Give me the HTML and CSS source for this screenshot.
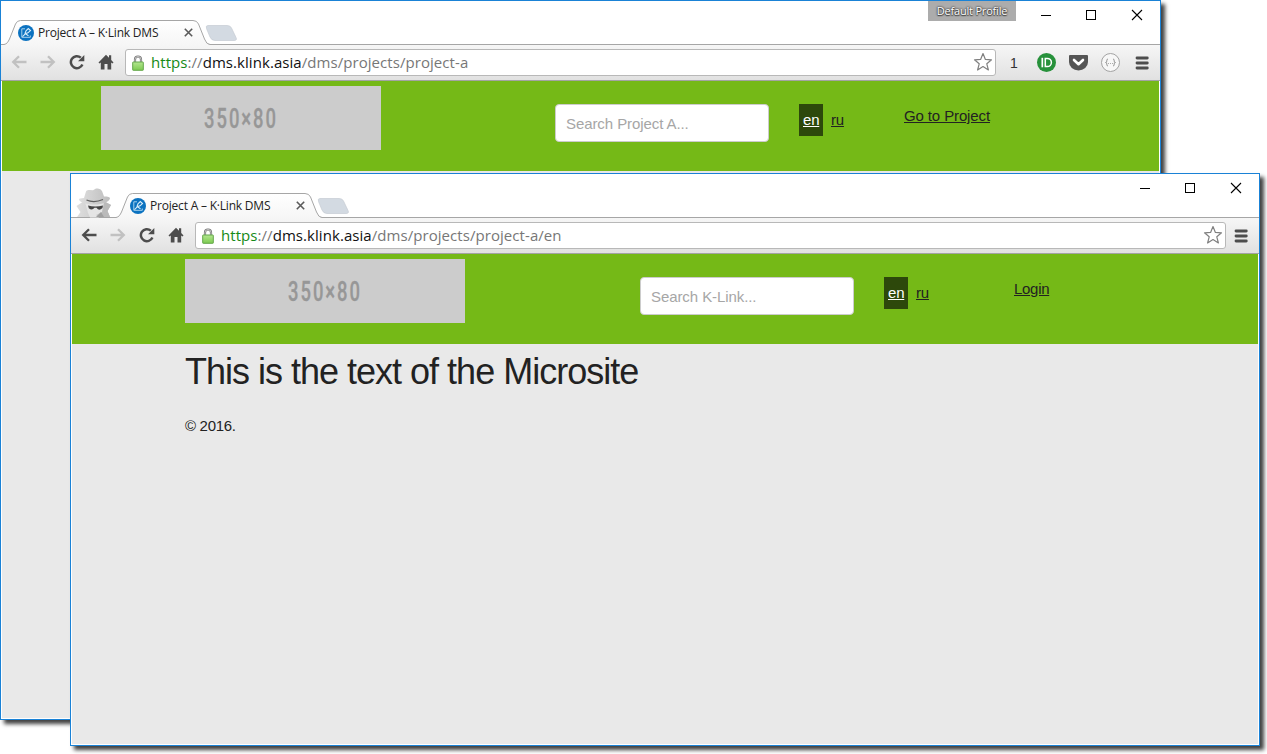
FILE: index.html
```
<!DOCTYPE html>
<html lang="en">
<head>
<meta charset="utf-8">
<title>Project A – K-Link DMS</title>
<link rel="stylesheet" href="styles.css">
</head>
<body>
<svg class="defs" width="0" height="0">
  <defs>
    <linearGradient id="tabfill" x1="0" y1="0" x2="0" y2="1"><stop offset="0" stop-color="#fff"/><stop offset="1" stop-color="#f6f6f6"/></linearGradient>
    <linearGradient id="lockfill" x1="0" y1="0" x2="0" y2="1"><stop offset="0" stop-color="#b4e690"/><stop offset="1" stop-color="#7ccb50"/></linearGradient>
    <linearGradient id="hat" x1="0" y1="0" x2="1" y2="0"><stop offset="0" stop-color="#dedede"/><stop offset="1" stop-color="#bdbdbd"/></linearGradient>
  </defs>
  <symbol id="tabshape" viewBox="0 0 240 25">
    <path d="M0 24.500C3 24 4 22 5.500 19L11.500 4Q13 .5 16.500 .5H189Q193 .5 194.500 4L200.500 19Q202 24.500 206 24.500V25H0Z" fill="url(#tabfill)"/>
    <path d="M0 24.500C3 24 4 22 5.500 19L11.500 4Q13 .5 16.500 .5H189Q193 .5 194.500 4L200.500 19Q202.500 24.500 206 24.500" fill="none" stroke="#a6a6a6"/>
    <path d="M204 5.500H223Q226.500 5.500 227.500 8L232 17.500Q233.500 20.500 230 20.500H211Q207.500 20.500 206 17L202.500 8.500Q201.500 5.500 204 5.500Z" fill="#d3dae2" stroke="#c6ccd3" stroke-width=".7"/>
  </symbol>
  <symbol id="favicon" viewBox="0 0 16 16">
    <circle cx="8" cy="8" r="8" fill="#0b72c0"/>
    <path d="M7 3.800H3.800V12.300H12.300V10.500" fill="none" stroke="#a5d0ec" stroke-width="1"/>
    <path d="M4.500 11.600L7.500 8.600M7 8.500L8 5.800 10.300 3.500 12.500 5.500 10 7.800 7.300 8.700 10.500 10.800" fill="none" stroke="#d8edfa" stroke-width="1.100"/>
  </symbol>
  <symbol id="closetab" viewBox="0 0 9 9"><path d="M.8 .8L8.200 8.200M8.200 .8L.8 8.200" stroke="#5a5a5a" stroke-width="1.600"/></symbol>
  <symbol id="arrow" viewBox="0 0 16 14"><path d="M15.500 7H2.500M8 1.200L2.200 7 8 12.800" fill="none" stroke="currentColor" stroke-width="2.300"/></symbol>
  <symbol id="reload" viewBox="0 0 16 16"><path d="M13.400 10.500A6 6 0 1 1 11.800 3.600" fill="none" stroke="#4d4d4d" stroke-width="2.500"/><path d="M15.300 1V7.300H9Z" fill="#4d4d4d"/></symbol>
  <symbol id="home" viewBox="0 0 16 16"><path d="M8 .8L11 3.800V1.300H13.200V6L15.500 8.500 14.500 9.500 13.200 8.500V15.500H9.500V10H6.500V15.500H2.800V8.500L1.500 9.500 .5 8.500Z" fill="#4d4d4d"/></symbol>
  <symbol id="lock" viewBox="0 0 12 16"><path d="M3 8V4.500A3 3 0 0 1 9 4.500V8" fill="none" stroke="#757575" stroke-width="2.200"/><path d="M3 8V4.500A3 3 0 0 1 9 4.500V8" fill="none" stroke="#d8d8d8" stroke-width=".8"/><rect x=".7" y="7" width="10.600" height="8.300" rx=".5" fill="url(#lockfill)" stroke="#63a74a"/></symbol>
  <symbol id="star" viewBox="0 0 20 20"><path d="M10 1.500L12.400 7.400 18.500 7.800 13.800 11.800 15.400 18 10 14.600 4.600 18 6.200 11.800 1.500 7.800 7.600 7.400Z" fill="#fff" stroke="#808080" stroke-width="1.200" stroke-linejoin="round"/></symbol>
  <symbol id="menu" viewBox="0 0 14 14"><path d="M2 2H12.300M2 7H12.300M2 12H12.300" stroke="#4d4d4d" stroke-width="2.800" stroke-linecap="round"/></symbol>
  <symbol id="controls" viewBox="0 0 102 13"><path d="M0 7.500H10" stroke="#000"/><rect x="45.500" y="2.500" width="9" height="9" fill="none" stroke="#000"/><path d="M91 2L101 12M101 2L91 12" stroke="#000" stroke-width="1.100"/></symbol>
  <symbol id="incognito" viewBox="0 0 36 30">
    <path d="M1 29L4.500 24 .5 18 8 13H28L35 17 31.500 23 34 29Z" fill="url(#hat)"/>
    <path d="M27 13L35 17 31.500 23 34 29H22L26 22Z" fill="#bababa"/>
    <path d="M9 14H28L26 24 20 27 23 29.500H14L12 25Z" fill="#e5e5e5"/>
    <path d="M8 10L10 3.500Q10.500 1.500 13.500 2L17 2.300 20 .6Q24.500 -.3 26 3L28 8.500C32 8.500 34 9 34 10.500 33 14 26 16.500 19 16.500S3 14.500 3 11.500Q3 10 8 10Z" fill="url(#hat)"/>
    <path d="M10.500 12Q18 15.300 27 11.500" fill="none" stroke="#606060" stroke-width="1.300"/>
    <path d="M12 17.500Q19 19.500 27 17.500L26.500 20Q23 23.500 20.500 19.800H18.500Q16 23 12.800 20.200Z" fill="#454545"/>
    <path d="M20 29L25 24 28 29Z" fill="#a0a0a0"/>
  </symbol>
</svg>

<section class="window window-back">
  <header class="strip">
    <div class="tab">
      <svg class="tab-shape" width="240" height="25"><use href="#tabshape"/></svg>
      <svg width="16" height="16"><use href="#favicon"/></svg>
      <span class="tab-title">Project A – K·Link DMS</span>
      <svg class="tab-close" width="9" height="9"><use href="#closetab"/></svg>
    </div>
    <span class="profile">Default Profile</span>
    <svg class="controls" width="102" height="13"><use href="#controls"/></svg>
  </header>
  <nav class="toolbar">
    <svg class="nav-icon off" width="16" height="14"><use href="#arrow"/></svg>
    <svg class="nav-icon off flip" width="16" height="14"><use href="#arrow"/></svg>
    <svg class="nav-icon" width="16" height="16"><use href="#reload"/></svg>
    <svg class="nav-icon" width="16" height="16"><use href="#home"/></svg>
    <div class="omnibox">
      <svg width="12" height="16"><use href="#lock"/></svg>
      <span class="url"><span class="scheme">https</span>://<span class="host">dms.klink.asia</span>/dms/projects/project-a</span>
      <svg class="star" width="20" height="20"><use href="#star"/></svg>
    </div>
    <div class="extensions">
      <span class="count">1</span>
      <svg width="20" height="20" viewBox="0 0 20 20"><circle cx="10.500" cy="10.500" r="9.500" fill="#27913b"/><path d="M6.300 5.800V15.300" stroke="#fff" stroke-width="1.700"/><path d="M9.300 6.400H11.300A4.100 4.100 0 0 1 11.300 14.600H9.300Z" fill="none" stroke="#fff" stroke-width="1.500"/></svg>
      <svg width="20" height="20" viewBox="0 0 20 20"><path d="M1 4Q1 3 2 3H19Q20 3 20 4V10A9.500 8.500 0 0 1 1 10Z" fill="#555"/><path d="M6 8L10.500 12.200 15 8" fill="none" stroke="#fff" stroke-width="2.600" stroke-linecap="round" stroke-linejoin="round"/></svg>
      <svg width="20" height="20" viewBox="0 0 20 20"><circle cx="10.500" cy="10.500" r="9" fill="#f7f7f7" stroke="#a3a3a3"/><path d="M8 7Q6.500 7 6.800 9 7 10.500 5.500 10.500 7 10.500 6.800 12 6.500 14 8 14M13 7Q14.500 7 14.200 9 14 10.500 15.500 10.500 14 10.500 14.200 12 14.500 14 13 14" fill="none" stroke="#999" stroke-width="1"/><path d="M8 11.500H13" stroke="#aaa" stroke-dasharray="1 1"/></svg>
    </div>
    <svg class="menu" width="14" height="14"><use href="#menu"/></svg>
  </nav>
  <main class="page">
    <div class="banner">
      <svg class="logo" width="280" height="64"><text class="logo-text" x="103" y="41.500" textLength="74" lengthAdjust="spacingAndGlyphs">350×80</text></svg>
      <div class="search">Search Project A...</div>
      <div class="langs"><a class="lang current">en</a><a class="lang">ru</a></div>
      <a class="action">Go to Project</a>
    </div>
  </main>
</section>

<section class="window window-front">
  <header class="strip">
    <svg class="spy" width="36" height="30"><use href="#incognito"/></svg>
    <div class="tab">
      <svg class="tab-shape" width="240" height="25"><use href="#tabshape"/></svg>
      <svg width="16" height="16"><use href="#favicon"/></svg>
      <span class="tab-title">Project A – K·Link DMS</span>
      <svg class="tab-close" width="9" height="9"><use href="#closetab"/></svg>
    </div>
    <svg class="controls" width="102" height="13"><use href="#controls"/></svg>
  </header>
  <nav class="toolbar">
    <svg class="nav-icon" width="16" height="14"><use href="#arrow"/></svg>
    <svg class="nav-icon off flip" width="16" height="14"><use href="#arrow"/></svg>
    <svg class="nav-icon" width="16" height="16"><use href="#reload"/></svg>
    <svg class="nav-icon" width="16" height="16"><use href="#home"/></svg>
    <div class="omnibox">
      <svg width="12" height="16"><use href="#lock"/></svg>
      <span class="url"><span class="scheme">https</span>://<span class="host">dms.klink.asia</span>/dms/projects/project-a/en</span>
      <svg class="star" width="20" height="20"><use href="#star"/></svg>
    </div>
    <svg class="menu" width="14" height="14"><use href="#menu"/></svg>
  </nav>
  <main class="page">
    <div class="banner">
      <svg class="logo" width="280" height="64"><text class="logo-text" x="103" y="41.500" textLength="74" lengthAdjust="spacingAndGlyphs">350×80</text></svg>
      <div class="search">Search K-Link...</div>
      <div class="langs"><a class="lang current">en</a><a class="lang">ru</a></div>
      <a class="action">Login</a>
    </div>
    <div class="content">
      <h1>This is the text of the Microsite</h1>
      <p>© 2016.</p>
    </div>
  </main>
</section>
</body>
</html>
```

FILE: styles.css
```
* { box-sizing: border-box; }
body { margin: 0; height: 754px; position: relative; overflow: hidden; background: #fff; font-family: "Liberation Sans", Arial, sans-serif; }
svg { flex: none; display: block; }
.defs { position: absolute; }

.window { position: absolute; display: flex; flex-direction: column; border: 1px solid #1a82d6; background: #fff; box-shadow: 4px 4px 4px rgba(0, 0, 0, .75); }
.window-back { left: 0; top: 0; width: 1161px; height: 720px; }
.window-front { left: 70px; top: 173px; width: 1190px; height: 573px; }

.strip { height: 44px; flex: none; display: flex; align-items: flex-end; box-shadow: inset 0 -1px #a6a6a6; }
.tab { position: relative; z-index: 0; width: 240px; height: 25px; display: flex; align-items: center; padding-left: 14px; }
.tab-shape { position: absolute; z-index: -1; left: 0; top: 0; }
.window-back .tab { margin-left: 3px; }
.window-front .tab { margin-left: 4px; }
.spy { margin: 0 0 0 5px; }
.tab-title { font: 12px/16px "Open Sans", "Noto Sans", sans-serif; color: #222; white-space: nowrap; margin-left: 4px; width: 146px; letter-spacing: -.2px; }
.profile { align-self: flex-start; margin-left: auto; width: 88px; height: 20px; background: #acacac; color: #fff; font: 11px/20px "Open Sans", "Noto Sans", sans-serif; text-align: center; white-space: nowrap; text-shadow: 0 0 2px #333, 0 0 2px #444, 0 1px 1px #444; letter-spacing: -.2px; }
.controls { align-self: flex-start; margin: 7px 17px 0 auto; }
.profile + .controls { margin-left: 25px; }

.toolbar { height: 36px; flex: none; display: flex; align-items: center; background: linear-gradient(#f6f6f6, #e1e1e1); border-bottom: 1px solid #a3a3a3; padding-left: 9px; }
.nav-icon { margin: -1px 12px 0 1px; color: #4d4d4d; }
.nav-icon.off { color: #c1c1c1; }
.flip { transform: scaleX(-1); }
.omnibox { height: 27px; flex: 1; margin-left: -1px; display: flex; align-items: center; background: #fff; border: 1px solid #b8b8b8; border-radius: 3px; padding: 0 2px 0 6px; }
.url { font: 15px/22px "Open Sans", "Noto Sans", sans-serif; color: #777; margin: -2px 0 0 7px; white-space: nowrap; letter-spacing: .06px; }
.scheme { color: #168a16; }
.host { color: #111; }
.star { margin-left: auto; margin-top: -1px; }
.extensions { display: flex; align-items: center; gap: 12px; margin: -1px 0 0 8px; }
.count { width: 20px; text-align: center; font: 14px/20px "Liberation Sans", Arial, sans-serif; color: #333; padding-top: 1px; }
.menu { margin: 0 11px 0 15px; }
.window-front .menu { margin: 0 11px 0 8px; }

.page { flex: 1; margin: 0 1px 1px; background: #e9e9e9; }
.banner { height: 90px; background: #75b917; display: flex; align-items: flex-start; font-size: 15px; letter-spacing: -.2px; color: #222; }
.logo { background: #ccc; margin: 5px 0 0 99px; }
.window-front .logo { margin-left: 113px; }
.logo-text { font: 500 28px Roboto, sans-serif; fill: #979797; stroke: #979797; stroke-width: .3px; letter-spacing: 3px; }
.search { width: 214px; height: 38px; margin: 23px 0 0 174px; padding: 0 10px; background: #fff; border: 1px solid #ccc; border-radius: 4px; color: #a6a6a6; line-height: 38px; letter-spacing: -.08px; }
.window-front .search { margin-left: 175px; }
.langs { display: flex; margin: 23px 0 0 30px; gap: 4px; }
.lang { width: 24px; height: 32px; padding: 0 4px; line-height: 32px; text-decoration: underline; }
.lang + .lang { width: 21px; }
.lang.current { background: #2d480b; color: #fff; }
.action { margin: 26px 0 0 56px; line-height: 18px; text-decoration: underline; letter-spacing: -.12px; }
.window-front .action { margin-left: 81px; letter-spacing: -.3px; }
.content { padding-left: 113px; color: #222; }
h1 { margin: 5px 0 0; font-size: 36px; line-height: 46px; font-weight: 400; letter-spacing: -1px; }
p { margin: 22px 0 0; font-size: 15px; line-height: 18px; letter-spacing: -.3px; }
```
